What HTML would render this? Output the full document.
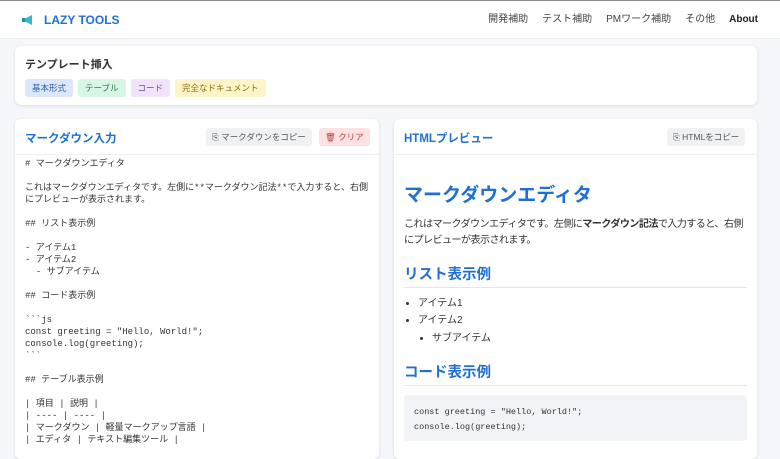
<!DOCTYPE html>
<html><head><meta charset="utf-8"><style>
*{box-sizing:border-box;margin:0;padding:0}
body{width:780px;height:448px;overflow:hidden;background:#f5f7fa;font-family:"Liberation Sans","Noto Sans CJK JP",sans-serif;color:#333;border-top:1px solid #888;}
.hdr{height:38px;background:#fff;border-bottom:1px solid #eceef2;position:relative}
.logo{position:absolute;left:22px;top:12px;display:flex;align-items:center;gap:10px;color:#1f6fd6;font-weight:bold;font-size:12px}
.nav{position:absolute;right:22px;top:12px;font-size:10px;color:#444;display:flex;gap:14px;align-items:baseline;line-height:14px}
.nav b{color:#222}
.card{position:absolute;background:#fff;border-radius:6px;box-shadow:0 1px 3px rgba(0,0,0,.12)}
.tpl{left:15px;top:46px;width:742px;height:59px}
.tpl h3{position:absolute;left:10px;top:10px;font-size:11px;color:#333}
.tags{position:absolute;left:10px;top:33px;display:flex;gap:5px}
.tags span{font-size:8.5px;padding:3px 7px;border-radius:3px}
.panel{top:119px;height:340px}
.ph{height:36px;border-bottom:1px solid #eef0f3;position:relative}
.ph h2{position:absolute;left:10px;top:11px;font-size:11.5px;color:#1f6fd6}
.btn{position:absolute;top:9px;font-size:8.5px;padding:3px 6px;border-radius:3px;background:#f0f1f3;color:#555}
pre{font-family:"Liberation Mono","Noto Sans CJK JP",monospace;font-size:9px;line-height:12px;color:#333;padding:3px 10px;white-space:pre-wrap}
.pv{padding:0 10px}
.pv h1{font-size:19px;color:#1f6fd6;margin-top:25px}
.pv p{font-size:10.1px;letter-spacing:-0.6px;line-height:16px;margin-top:10px;color:#333;white-space:nowrap}
.pv h2{font-size:14.5px;color:#1f6fd6;margin-top:14px;padding-bottom:3px;border-bottom:1px solid #e5e7eb}
.pv ul{font-size:10px;margin:7px 0 0 14px;line-height:17.3px}
.pv ul ul{margin:0 0 0 14px;list-style:disc}
.code{background:#f1f3f6;border-radius:3px;margin-top:9px;height:46px;padding:10px 10px;font-family:"Liberation Mono",monospace;font-size:8.5px;line-height:15px;color:#333}
</style></head><body>
<div class="hdr">
<div class="logo"><svg width="12" height="10" viewBox="0 0 12 10"><path d="M1 3h3l6-3v10L4 7H1z" fill="#35b8c8"/><rect x="0" y="3" width="3" height="4" fill="#1f8fa0"/></svg>LAZY TOOLS</div>
<div class="nav"><span>開発補助</span><span>テスト補助</span><span>PMワーク補助</span><span>その他</span><b>About</b></div>
</div>
<div class="card tpl"><h3>テンプレート挿入</h3>
<div class="tags"><span style="background:#dbe8fb;color:#2c5fae">基本形式</span><span style="background:#d9f5e3;color:#2f7a4a">テーブル</span><span style="background:#f0e3fb;color:#7a44b0">コード</span><span style="background:#fdf5c8;color:#8a6a10">完全なドキュメント</span></div></div>
<div class="card panel" style="left:15px;width:364px">
<div class="ph"><h2>マークダウン入力</h2><span class="btn" style="left:191px">⎘ マークダウンをコピー</span><span class="btn" style="left:304px;background:#fde2e2;color:#c23a3a">🗑 クリア</span></div>
<pre># マークダウンエディタ

これはマークダウンエディタです。左側に**マークダウン記法**で入力すると、右側にプレビューが表示されます。

## リスト表示例

- アイテム1
- アイテム2
  - サブアイテム

## コード表示例

&#96;&#96;&#96;js
const greeting = "Hello, World!";
console.log(greeting);
&#96;&#96;&#96;

## テーブル表示例

| 項目 | 説明 |
| ---- | ---- |
| マークダウン | 軽量マークアップ言語 |
| エディタ | テキスト編集ツール |</pre>
</div>
<div class="card panel" style="left:394px;width:363px">
<div class="ph"><h2>HTMLプレビュー</h2><span class="btn" style="left:273px">⎘ HTMLをコピー</span></div>
<div class="pv"><h1>マークダウンエディタ</h1>
<p>これはマークダウンエディタです。左側に<b>マークダウン記法</b>で入力すると、右側<br>にプレビューが表示されます。</p>
<h2>リスト表示例</h2>
<ul><li>アイテム1</li><li>アイテム2<ul><li>サブアイテム</li></ul></li></ul>
<h2>コード表示例</h2>
<div class="code">const greeting = "Hello, World!";<br>console.log(greeting);</div></div>
</div>
</body></html>
